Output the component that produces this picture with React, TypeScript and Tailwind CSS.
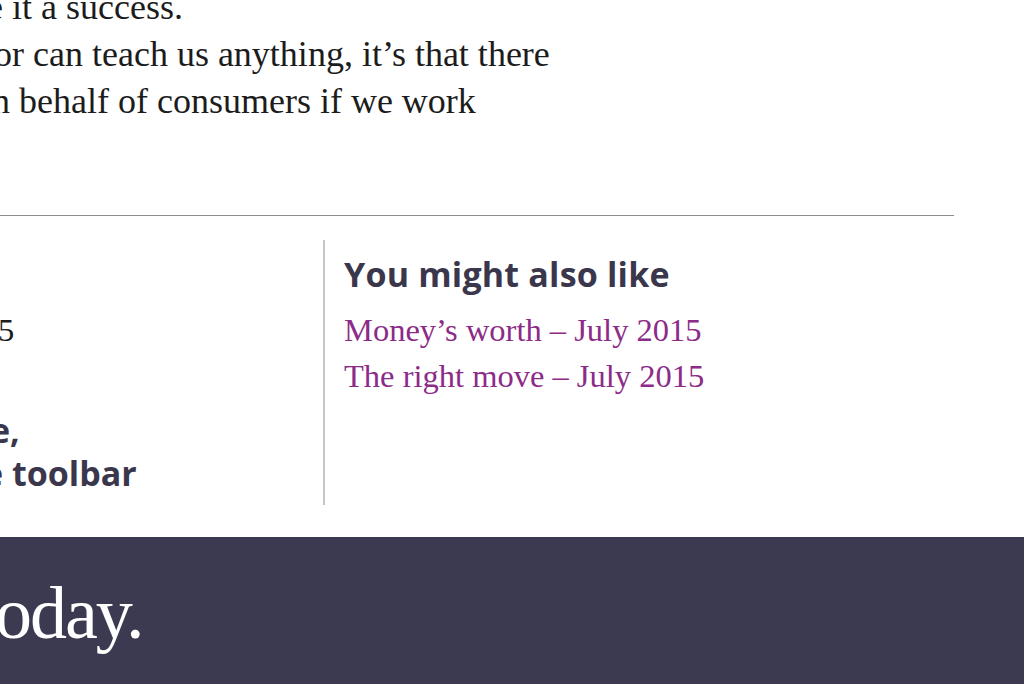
import React from "react";

const serif = { fontFamily: '"Liberation Serif", "Times New Roman", serif' };
const sans = { fontFamily: '"Open Sans", "Noto Sans", sans-serif' };

export default function App() {
  return (
    <div className="w-[1024px] h-[684px] overflow-hidden bg-white flex flex-col">
      <main className="flex-1">
        <div
          className="mt-[-16px] text-[36px] leading-[47px] text-[#1c1c1c] whitespace-nowrap"
          style={serif}
        >
          <div className="ml-[-13px]">e it a success.</div>
          <div className="ml-[-6px]">or can teach us anything, it’s that there</div>
          <div className="ml-[-8px]">n behalf of consumers if we work</div>
        </div>

        <div className="mt-[90px] w-[954px] h-px bg-[#8c8c8c]" />

        <div className="mt-[24px] flex">
          <div className="w-[325px] h-[265px] border-r-2 border-[#c6c5cc] whitespace-nowrap">
            <div className="h-[44px] mt-[12px]" />
            <div
              className="mt-[11px] text-[32.5px] leading-[46px] text-[#1c1c1c] ml-[-2px]"
              style={serif}
            >
              5
            </div>
            <div
              className="mt-[56px] text-[34px] leading-[43px] font-bold text-[#3a374d]"
              style={sans}
            >
              <div className="ml-[-10px]">e,</div>
              <div className="ml-[-17px]">e toolbar</div>
            </div>
          </div>

          <div className="pl-[19px] whitespace-nowrap">
            <h2
              className="mt-[12px] text-[34px] leading-[44px] font-bold tracking-[0.2px] text-[#3a374d]"
              style={sans}
            >
              You might also like
            </h2>
            <ul className="mt-[11px] text-[32.5px] leading-[46px] text-[#8c2b88]" style={serif}>
              <li>
                <a href="#">Money’s worth – July 2015</a>
              </li>
              <li>
                <a href="#">The right move – July 2015</a>
              </li>
            </ul>
          </div>
        </div>
      </main>

      <footer className="h-[147px] shrink-0 bg-[#3c3a50] pt-[39px]">
        <div
          className="ml-[-5px] text-[74px] leading-[74px] tracking-[-2px] text-white whitespace-nowrap"
          style={serif}
        >
          oday.
        </div>
      </footer>
    </div>
  );
}
